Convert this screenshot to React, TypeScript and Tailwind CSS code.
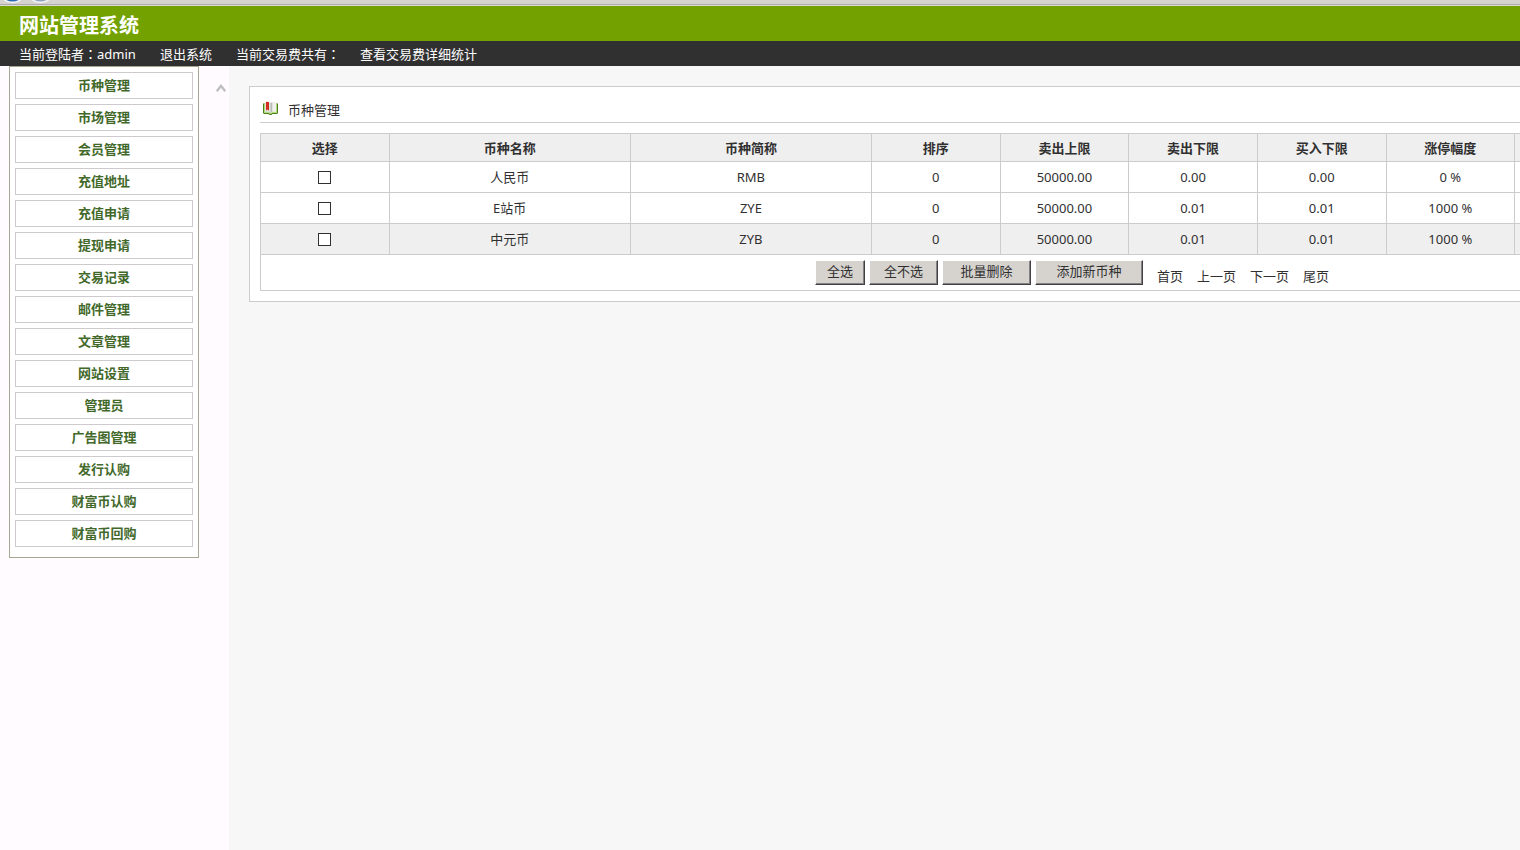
import { useState } from "react";

type Coin = {
  name: string;
  code: string;
  order: number;
  sellMax: string;
  sellMin: string;
  buyMin: string;
  limit: string;
};

const menu = [
  "币种管理",
  "市场管理",
  "会员管理",
  "充值地址",
  "充值申请",
  "提现申请",
  "交易记录",
  "邮件管理",
  "文章管理",
  "网站设置",
  "管理员",
  "广告图管理",
  "发行认购",
  "财富币认购",
  "财富币回购",
];

const columns = ["选择", "币种名称", "币种简称", "排序", "卖出上限", "卖出下限", "买入下限", "涨停幅度"];

const coins: Coin[] = [
  { name: "人民币", code: "RMB", order: 0, sellMax: "50000.00", sellMin: "0.00", buyMin: "0.00", limit: "0 %" },
  { name: "E站币", code: "ZYE", order: 0, sellMax: "50000.00", sellMin: "0.01", buyMin: "0.01", limit: "1000 %" },
  { name: "中元币", code: "ZYB", order: 0, sellMax: "50000.00", sellMin: "0.01", buyMin: "0.01", limit: "1000 %" },
];

const pages = ["首页", "上一页", "下一页", "尾页"];

// The TC face centres the full-width colon in its box
function Colon() {
  return <span className="font-['Noto_Sans_CJK_TC',sans-serif]">：</span>;
}

function BookIcon() {
  return (
    <svg className="mb-[3px]" width="15" height="14" viewBox="0 0 15 14" aria-hidden="true">
      <path d="M0 2.500h15V12l-1 1H9.500l-1 1h-2l-1-1H1l-1-1z" fill="#4a7d1c" />
      <path d="M1 2.500h13V12H9.500L8 13H7l-1.500-1H1z" fill="#b5dc7c" />
      <path d="M2 1.500C4 .6 6 .8 7.500 2v10C6 10.800 4 10.600 2 11z" fill="#dfe2dc" />
      <path d="M13 1.500C11 .6 9 .8 7.500 2v10c1.500-1.200 3.500-1.400 5.500-1z" fill="#f1f2ef" />
      <path d="M7.500 2 9.300 1.200v9.500L7.500 12z" fill="#b9bcb7" />
      <path d="M3 .8 6 1v8.800L4.500 8.500 3 9.600z" fill="#d2301f" />
    </svg>
  );
}

function BrowserEdge() {
  return (
    <div className="h-[6px] border-b border-[#dedbd7] bg-[#d6d3ce]">
      <div className="h-[5px] border-b border-[#aeabb0]">
        <svg width="60" height="4" viewBox="0 0 60 4" aria-hidden="true">
          <ellipse cx="12.500" cy="-3" rx="10" ry="6" fill="#f4f6f8" />
          <ellipse cx="12.500" cy="-3" rx="8" ry="4.600" fill="#2c69b0" />
          <ellipse cx="40.500" cy="-3" rx="10" ry="6" fill="#f4f6f8" />
          <ellipse cx="40.500" cy="-3" rx="8" ry="4.600" fill="#8fa3bb" />
        </svg>
      </div>
    </div>
  );
}

function Sidebar() {
  return (
    <aside className="flex w-[229px] shrink-0 items-start justify-between bg-[#fffbff] pr-[3px] pl-[9px]">
      <nav className="flex w-[190px] flex-col gap-[5px] border border-[#a5a794] bg-white px-[5px] pt-[5px] pb-[10px]">
        {menu.map((item) => (
          <a
            key={item}
            href="#"
            className="flex h-[27px] items-center justify-center border border-[#cecbce] pb-px font-bold text-[#42692a]"
          >
            {item}
          </a>
        ))}
      </nav>
      <svg className="mt-[18px]" width="10" height="8" viewBox="0 0 10 8" aria-hidden="true">
        <path d="M0.700 7.200 5 2 9.300 7.200" fill="none" stroke="#bdbebd" strokeWidth="2.400" />
      </svg>
    </aside>
  );
}

function ActionButton({ label, width, onClick }: { label: string; width: string; onClick?: () => void }) {
  return (
    <button
      type="button"
      onClick={onClick}
      className={`${width} h-[25px] border border-t-white border-r-[#424142] border-b-[#424142] border-l-white bg-[#d6d3ce] pb-[2px] shadow-[inset_-1px_-1px_0_#848284]`}
    >
      {label}
    </button>
  );
}

function CoinTable() {
  const [selected, setSelected] = useState<string[]>([]);

  function toggle(code: string) {
    setSelected(selected.includes(code) ? selected.filter((c) => c !== code) : [...selected, code]);
  }

  return (
    <table className="w-full table-fixed border-collapse text-center [&_td]:border [&_td]:border-[#cecbce] [&_th]:border [&_th]:border-[#cecbce]">
      <colgroup>
        <col className="w-[8%]" />
        <col className="w-[15%]" />
        <col className="w-[15%]" />
        <col className="w-[8%]" />
        <col className="w-[8%]" />
        <col className="w-[8%]" />
        <col className="w-[8%]" />
        <col className="w-[8%]" />
        <col />
      </colgroup>
      <thead>
        <tr className="h-[28px] bg-[#efefef]">
          {columns.map((column) => (
            <th key={column} className="font-bold">
              {column}
            </th>
          ))}
          <th />
        </tr>
      </thead>
      <tbody>
        {coins.map((coin, i) => (
          <tr key={coin.code} className={i === 2 ? "h-[31px] bg-[#efefef]" : "h-[31px]"}>
            <td>
              <input
                type="checkbox"
                aria-label={coin.name}
                checked={selected.includes(coin.code)}
                onChange={() => toggle(coin.code)}
                className="mx-auto block size-[13px] appearance-none border border-[#313031] bg-white checked:bg-[#313031]"
              />
            </td>
            <td>{coin.name}</td>
            <td>{coin.code}</td>
            <td>{coin.order}</td>
            <td>{coin.sellMax}</td>
            <td>{coin.sellMin}</td>
            <td>{coin.buyMin}</td>
            <td>{coin.limit}</td>
            <td />
          </tr>
        ))}
      </tbody>
      <tfoot>
        <tr className="h-[36px]">
          <td colSpan={9} className="pb-px">
            <div className="flex items-end justify-center gap-[14px] pl-[15px]">
              <div className="flex gap-1">
                <ActionButton label="全选" width="w-[50px]" onClick={() => setSelected(coins.map((c) => c.code))} />
                <ActionButton label="全不选" width="w-[69px]" onClick={() => setSelected([])} />
                <ActionButton label="批量删除" width="w-[89px]" />
                <ActionButton label="添加新币种" width="w-[108px]" />
              </div>
              {pages.map((page) => (
                <a key={page} href="#">
                  {page}
                </a>
              ))}
            </div>
          </td>
        </tr>
      </tfoot>
    </table>
  );
}

export default function App() {
  return (
    <div className="flex min-h-screen flex-col overflow-hidden bg-[#f7f7f7] font-['Noto_Sans','Noto_Sans_CJK_SC',sans-serif] text-[13px] leading-[18px] text-[#313031]">
      <BrowserEdge />
      <header className="text-white">
        <div className="flex h-[35px] items-center bg-[#73a200] px-[19px] pt-1">
          <h1 className="text-[20px] leading-[28px] font-bold">网站管理系统</h1>
        </div>
        <div className="flex h-[25px] items-center gap-5 bg-[#313031] px-[19px]">
          <span className="pr-1">
            当前登陆者
            <Colon />
            admin
          </span>
          <a href="#" className="pr-1">
            退出系统
          </a>
          <span>
            当前交易费共有
            <Colon />
          </span>
          <a href="#">查看交易费详细统计</a>
        </div>
      </header>
      <div className="flex grow">
        <Sidebar />
        <main className="min-w-0 grow overflow-hidden p-5">
          <section className="min-w-[1631px] border border-[#cecbce] bg-white p-[10px]">
            <div className="mb-[10px] flex h-[26px] items-center gap-[10px] border-b border-[#cecbce] px-[3px]">
              <BookIcon />
              <h2>币种管理</h2>
            </div>
            <CoinTable />
          </section>
        </main>
      </div>
    </div>
  );
}
